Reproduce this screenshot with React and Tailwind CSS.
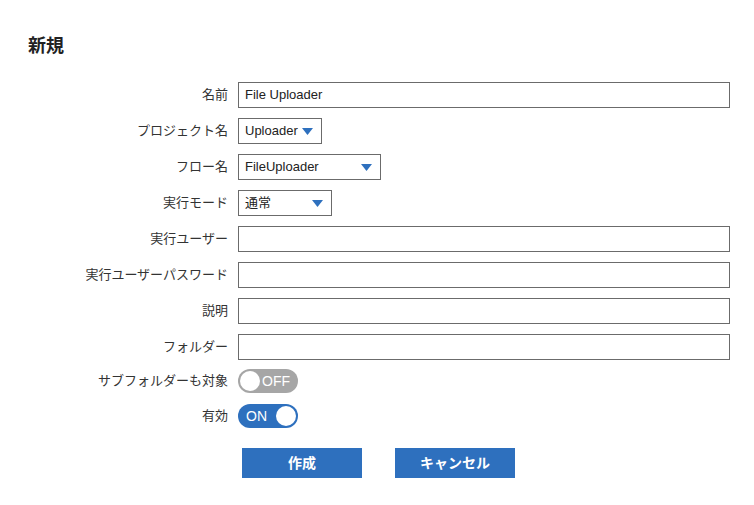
export default function App() {
  const font = { fontFamily: '"Liberation Sans", "Noto Sans CJK JP", sans-serif' };

  const Arrow = () => (
    <svg width="11" height="7" viewBox="0 0 11 7" className="shrink-0">
      <polygon points="0,0 11,0 5.5,7" fill="#2e70be" />
    </svg>
  );

  const Row = ({ label, children }) => (
    <div className="flex items-center h-[26px] mb-[10px]">
      <div className="w-[228px] pr-0 text-right text-[13px] text-[#333]">{label}</div>
      <div className="ml-[10px] flex-1 flex items-center">{children}</div>
    </div>
  );

  const Input = ({ value = "" }) => (
    <div className="w-[492px] h-[26px] border border-[#6b6b6b] flex items-center px-[6px] text-[13px] text-[#222]">
      {value}
    </div>
  );

  const Select = ({ value, width }) => (
    <div
      className={`${width} h-[26px] border border-[#6b6b6b] flex items-center justify-between pl-[6px] pr-[8px] text-[13px] text-[#222]`}
    >
      <span>{value}</span>
      <Arrow />
    </div>
  );

  return (
    <div className="w-[754px] h-[505px] bg-white" style={font}>
      <div className="pt-[33px] pl-[28px] text-[18px] font-bold text-[#222]">新規</div>
      <div className="pt-[22px]">
        <Row label="名前">
          <Input value="File Uploader" />
        </Row>
        <Row label="プロジェクト名">
          <Select value="Uploader" width="w-[84px]" />
        </Row>
        <Row label="フロー名">
          <Select value="FileUploader" width="w-[143px]" />
        </Row>
        <Row label="実行モード">
          <Select value="通常" width="w-[94px]" />
        </Row>
        <Row label="実行ユーザー">
          <Input />
        </Row>
        <Row label="実行ユーザーパスワード">
          <Input />
        </Row>
        <Row label="説明">
          <Input />
        </Row>
        <Row label="フォルダー">
          <Input />
        </Row>
        <div className="flex items-center h-[24px] mb-[11px] mt-[-1px]">
          <div className="w-[228px] text-right text-[13px] text-[#333]">サブフォルダーも対象</div>
          <div className="ml-[10px] w-[60px] h-[24px] rounded-full bg-[#a6a6a6] flex items-center px-[2px]">
            <div className="w-[20px] h-[20px] rounded-full bg-white" />
            <span className="ml-[2px] text-[14px] text-white">OFF</span>
          </div>
        </div>
        <div className="flex items-center h-[24px]">
          <div className="w-[228px] text-right text-[13px] text-[#333]">有効</div>
          <div className="ml-[10px] w-[60px] h-[24px] rounded-full bg-[#2e70be] flex items-center justify-between pl-[8px] pr-[2px]">
            <span className="text-[14px] text-white">ON</span>
            <div className="w-[20px] h-[20px] rounded-full bg-white" />
          </div>
        </div>
        <div className="flex pl-[242px] mt-[20px] gap-[33px]">
          <button className="w-[120px] h-[30px] bg-[#2e70be] text-white text-[14px] font-bold">作成</button>
          <button className="w-[120px] h-[30px] bg-[#2e70be] text-white text-[14px] font-bold">キャンセル</button>
        </div>
      </div>
    </div>
  );
}
